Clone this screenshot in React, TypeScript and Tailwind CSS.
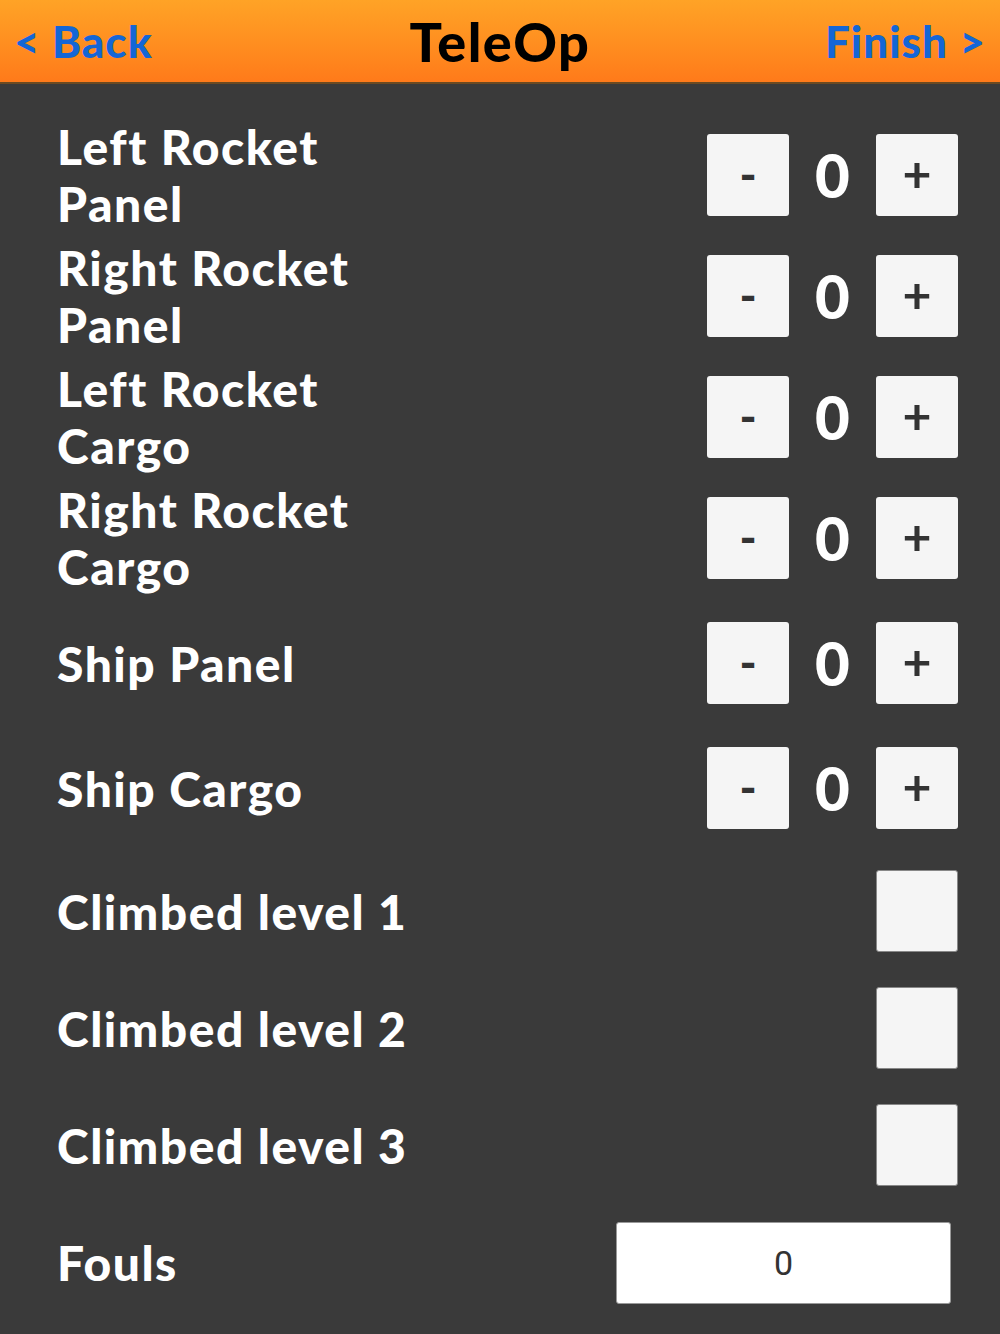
const rounded = { fontFamily: "Lato, 'Open Sans', sans-serif" }

type Row =
  | { kind: "counter"; label: string[]; h: string }
  | { kind: "check"; label: string[]; h: string }

const rows: Row[] = [
  { kind: "counter", label: ["Left Rocket", "Panel"], h: "h-[121px]" },
  { kind: "counter", label: ["Right Rocket", "Panel"], h: "h-[121px]" },
  { kind: "counter", label: ["Left Rocket", "Cargo"], h: "h-[121px]" },
  { kind: "counter", label: ["Right Rocket", "Cargo"], h: "h-[121px]" },
  { kind: "counter", label: ["Ship Panel"], h: "h-[130px]" },
  { kind: "counter", label: ["Ship Cargo"], h: "h-[120px]" },
  { kind: "check", label: ["Climbed level 1"], h: "h-[126px]" },
  { kind: "check", label: ["Climbed level 2"], h: "h-[108px]" },
  { kind: "check", label: ["Climbed level 3"], h: "h-[126px]" },
]

function Counter() {
  return (
    <div className="flex items-center">
      <button className="w-[82px] h-[82px] rounded-[3px] bg-[#f5f5f5] text-[#333] text-[46px] font-black leading-none flex items-center justify-center pb-[2px]">
        -
      </button>
      <span className="w-[87px] text-center text-white text-[60px] font-black leading-none">0</span>
      <button className="w-[82px] h-[82px] rounded-[3px] bg-[#f5f5f5] text-[#333] text-[50px] font-bold leading-none flex items-center justify-center pb-[4px]">
        +
      </button>
    </div>
  )
}

export default function App() {
  return (
    <div className="w-[1000px] h-[1334px] bg-[#3a3a3a] overflow-hidden" style={rounded}>
      <header className="h-[84px] bg-gradient-to-b from-[#ffa326] to-[#ff7a1a] border-b-2 border-[#6b4a22] flex items-center justify-between px-[14px]">
        <span className="w-[220px] text-[#1466d6] text-[44px] font-black tracking-[1px]">&lt; Back</span>
        <span className="text-black text-[54px] font-black tracking-[1.5px]">TeleOp</span>
        <span className="w-[220px] text-right text-[#1466d6] text-[44px] font-black tracking-[1px]">Finish &gt;</span>
      </header>

      <main className="pt-[30px] pl-[57px] pr-[42px]">
        {rows.map((r, i) => (
          <div key={i} className={`flex items-center justify-between ${r.h}`}>
            <div className="text-white text-[48px] font-black leading-[57px] tracking-[1.5px]">
              {r.label.map((l) => (
                <div key={l}>{l}</div>
              ))}
            </div>
            {r.kind === "counter" ? (
              <Counter />
            ) : (
              <div className="w-[82px] h-[82px] rounded-[3px] bg-[#f5f5f5] border border-[#888]" />
            )}
          </div>
        ))}

        <div className="flex items-center justify-between h-[110px] pr-[7px]">
          <div className="text-white text-[48px] font-black tracking-[1.5px]">Fouls</div>
          <div className="w-[335px] h-[82px] bg-white rounded-[3px] border border-[#999] flex items-center justify-center text-[#333] text-[34px]" style={{ fontFamily: "Roboto, sans-serif" }}>
            0
          </div>
        </div>
      </main>
    </div>
  )
}
